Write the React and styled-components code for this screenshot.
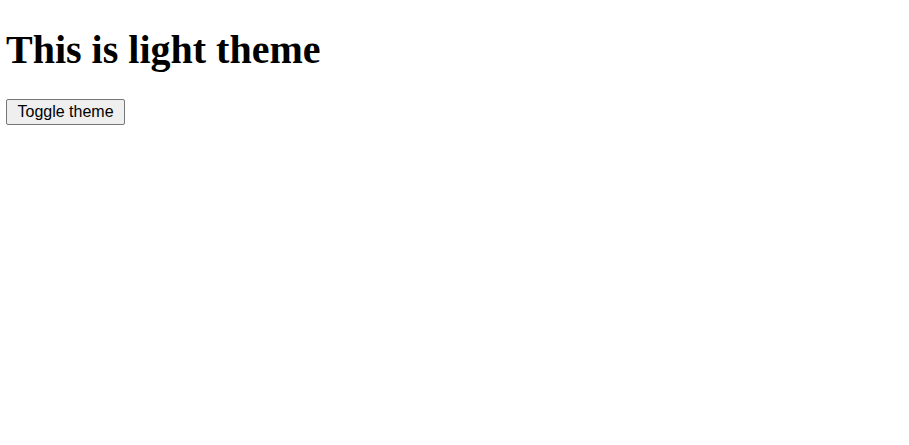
import React, { useState } from "react";
import styled, { createGlobalStyle } from "styled-components";

const themes = {
    light: { bg: "#ffffff", fg: "#000000" },
    dark: { bg: "#121212", fg: "#ffffff" },
};

const GlobalStyle = createGlobalStyle`
    body {
        margin: 6px;
        background: ${(p) => p.bg};
        color: ${(p) => p.fg};
        font-family: "Liberation Serif", "Times New Roman", serif;
    }
`

const Title = styled.h1`
    font-size: 40px;
    font-weight: bold;
    margin: 19.5px 0 26.8px;
    line-height: normal;
`

const ToggleButton = styled.button`
    font-family: "Liberation Sans", Arial, sans-serif;
    font-size: 16px;
    color: #000;
    background-color: #efefef;
    border: 1px solid #767676;
    border-radius: 2px;
    padding: 3px 10px 3px 10.5px;
    line-height: normal;
    cursor: pointer;
`

const App = () => {
    const [mode, setMode] = useState("light");
    const theme = themes[mode];

    return (
        <>
            <GlobalStyle bg={theme.bg} fg={theme.fg} />
            <Title>This is {mode} theme</Title>
            <ToggleButton onClick={() => setMode(mode === "light" ? "dark" : "light")}>
                Toggle theme
            </ToggleButton>
        </>
    )
}

export default App;
